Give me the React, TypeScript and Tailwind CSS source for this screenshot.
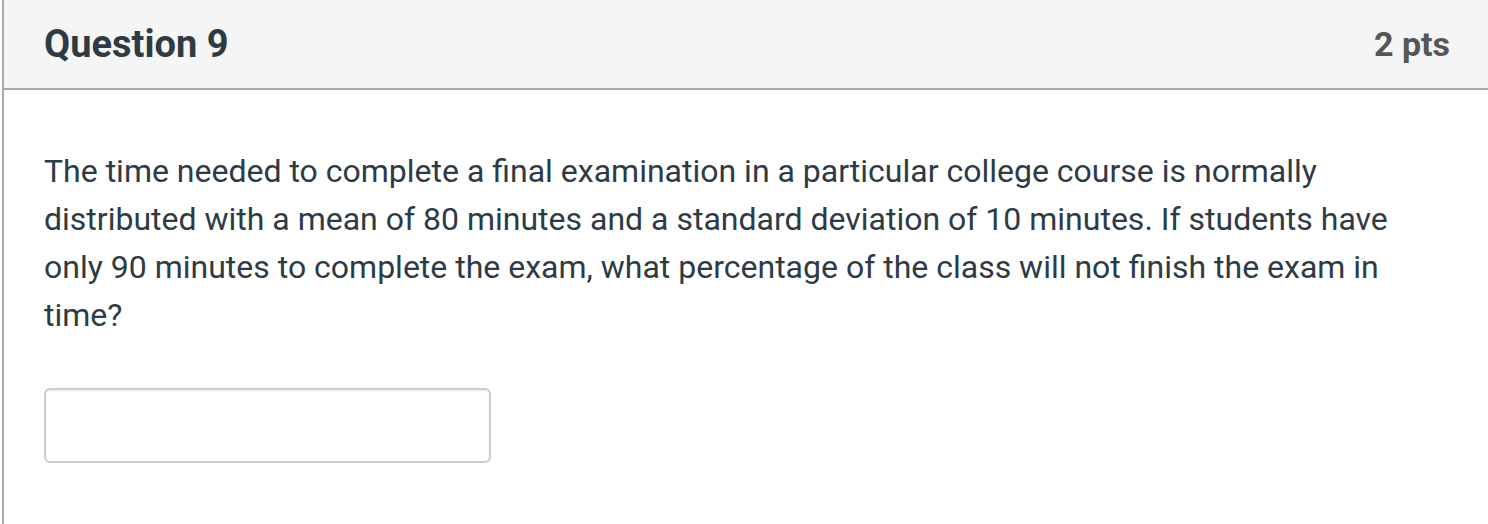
export default function App() {
  return (
    <div className="h-[524px] w-[1488px] overflow-hidden bg-white font-['Roboto',sans-serif]">
      <div className="ml-[2px] h-full w-[1486px] border-l-2 border-[#aaaaaa]">
        <div className="flex h-[90px] items-center justify-between border-b-2 border-[#aaaaaa] bg-[#f5f5f5] pl-[40px] pr-[38px]">
          <h2 className="text-[38px] font-bold leading-none text-[#2d3b45]">Question 9</h2>
          <div className="text-[34px] font-bold leading-none text-[#565656]">2 pts</div>
        </div>
        <div className="pl-[40px] pr-[40px] pt-[57px]">
          <p className="text-[32px] leading-[48px] text-[#2d3b45]">
            The time needed to complete a final examination in a particular college course is normally
            distributed with a mean of 80 minutes and a standard deviation of 10 minutes. If students have
            only 90 minutes to complete the exam, what percentage of the class will not finish the exam in
            time?
          </p>
          <input
            type="text"
            className="mt-[49px] block h-[75px] w-[447px] rounded-[6px] border-2 border-[#cccccc] bg-white shadow-[inset_0_1px_2px_rgba(0,0,0,0.08)] outline-none"
          />
        </div>
      </div>
    </div>
  );
}
